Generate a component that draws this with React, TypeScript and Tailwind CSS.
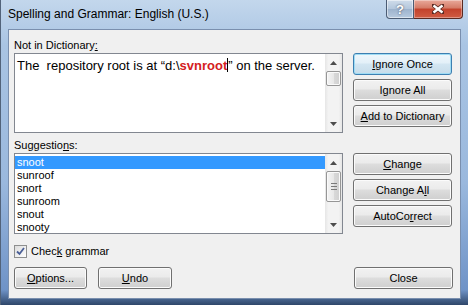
import type { ReactNode } from "react";

// --- estilos base ---
const UI_FONT = "font-['Segoe_UI','Liberation_Sans',Arial,sans-serif]";

const SUGGESTIONS = ["snoot", "sunroof", "snort", "sunroom", "snout", "snooty"];

// Botão no estilo Windows 7
function WinButton({
  children,
  isDefault = false,
  className = "",
}: {
  children: ReactNode;
  isDefault?: boolean;
  className?: string;
}) {
  return (
    <div
      className={`flex h-[22px] items-center justify-center rounded-[3px] border text-[11px] leading-none text-black ${
        isDefault
          ? "border-[#3c7fb1] bg-[linear-gradient(#eef7fc,#e3f0f8_45%,#d3e6f2_50%,#c6dcea)] shadow-[inset_0_0_0_1px_#9fdcf4]"
          : "border-[#707070] bg-[linear-gradient(#f2f2f2,#ebebeb_45%,#dddddd_50%,#cfcfcf)] shadow-[inset_0_0_0_1px_#fbfbfb]"
      } ${className}`}
    >
      {children}
    </div>
  );
}

// Seta da barra de rolagem
function Arrow({ up }: { up?: boolean }) {
  return (
    <div className="flex h-[17px] items-center justify-center">
      <svg width="7" height="4" viewBox="0 0 7 4">
        {up ? (
          <path d="M0 4 L3.5 0 L7 4 Z" fill="#4d4d4d" />
        ) : (
          <path d="M0 0 L3.5 4 L7 0 Z" fill="#4d4d4d" />
        )}
      </svg>
    </div>
  );
}

// Barra de rolagem vertical
function ScrollBar({ thumb, grip }: { thumb: number; grip?: boolean }) {
  return (
    <div className="flex w-[17px] shrink-0 flex-col bg-[linear-gradient(90deg,#e6e6e6,#f3f3f3_20%,#f3f3f3_80%,#e6e6e6)]">
      <Arrow up />
      <div className="flex-1">
        <div
          className="mx-[1px] flex items-center justify-center rounded-[2px] border border-[#969696] bg-[linear-gradient(90deg,#f4f4f4,#e8e8e8_50%,#d9d9d9_51%,#d0d0d0)] shadow-[inset_0_0_0_1px_#fafafa]"
          style={{ height: thumb }}
        >
          {grip && (
            <div className="flex flex-col gap-[2px]">
              <div className="h-px w-[6px] bg-[#7a7a7a]" />
              <div className="h-px w-[6px] bg-[#7a7a7a]" />
              <div className="h-px w-[6px] bg-[#7a7a7a]" />
            </div>
          )}
        </div>
      </div>
      <Arrow />
    </div>
  );
}

export default function App() {
  return (
    <div
      className={`relative h-[305px] w-[468px] overflow-hidden border-l border-[#52637a] bg-[linear-gradient(180deg,#c3d7ec,#a9c4e3_15%,#9ab8dd_60%,#6f93c7_95%,#2e4669)] ${UI_FONT}`}
    >
      {/* barra de título */}
      <div className="flex h-[29px] items-start">
        <div className="pl-[7px] pt-[7px] text-[12px] leading-[15px] text-black">
          Spelling and Grammar: English (U.S.)
        </div>
        <div className="ml-auto mr-[5px] flex">
          <div className="flex h-[19px] w-[28px] items-center justify-center rounded-bl-[4px] border border-t-0 border-[#4b5c74] bg-[linear-gradient(#cfdcea,#b3c6dc_50%,#9db3cd_51%,#b7cadf)] shadow-[inset_0_0_0_1px_rgba(255,255,255,0.5)]">
            <span className="text-[13px] font-bold leading-none text-white [text-shadow:0_0_2px_#334]">
              ?
            </span>
          </div>
          <div className="flex h-[19px] w-[49px] items-center justify-center rounded-br-[4px] border border-l-0 border-t-0 border-[#5a2a22] bg-[linear-gradient(#e9a99b,#d47a66_45%,#c2412b_50%,#d05c43)] shadow-[inset_0_0_0_1px_rgba(255,255,255,0.35)]">
            <svg width="12" height="10" viewBox="0 0 12 10">
              <path
                d="M1 1 L11 9 M11 1 L1 9"
                stroke="#5a2a22"
                strokeWidth="4"
                strokeLinecap="round"
              />
              <path
                d="M1.5 1.5 L10.5 8.5 M10.5 1.5 L1.5 8.5"
                stroke="#ffffff"
                strokeWidth="2.4"
              />
            </svg>
          </div>
        </div>
      </div>

      {/* conteúdo */}
      <div className="mx-[7px] flex h-[270px] flex-col border border-[#7a8fae] bg-[#f0f0f0] pl-[5px] pr-[7px] pt-[8px] text-[11px] leading-[15px] text-black">
        <div className="h-[15px]">
          Not in Dictionary<span className="underline">:</span>
        </div>

        <div className="flex gap-[10px]">
          <div className="flex h-[80px] w-[329px] border border-[#828790] bg-white">
            <div className="flex-1 pl-[2px] pt-[2px] font-['Liberation_Sans',Arial,sans-serif] text-[13px] leading-[16px] whitespace-nowrap">
              The&nbsp; repository root is at “d:\
              <span className="font-bold text-[#d42020]">svnroot</span>
              <span className="inline-block h-[14px] w-px translate-y-[2px] bg-black" />” on the server.
            </div>
            <ScrollBar thumb={15} />
          </div>
          <div className="flex w-[99px] flex-col gap-[4px]">
            <WinButton isDefault>
              <span className="underline">I</span>gnore Once
            </WinButton>
            <WinButton>
              I<span className="underline">g</span>nore All
            </WinButton>
            <WinButton>
              <span className="underline">A</span>dd to Dictionary
            </WinButton>
          </div>
        </div>

        <div className="mt-[5px] h-[15px]">
          Suggestio<span className="underline">n</span>s:
        </div>

        <div className="flex gap-[10px]">
          <div className="flex h-[81px] w-[329px] border border-[#828790] bg-white">
            <div className="flex-1 pt-[2px] font-['Liberation_Sans',Arial,sans-serif] text-[11px] leading-[13px]">
              {SUGGESTIONS.map((word, i) => (
                <div
                  key={word}
                  className={`h-[13px] pl-[2px] ${
                    i === 0 ? "bg-[#3399ff] text-white" : ""
                  }`}
                >
                  {word}
                </div>
              ))}
            </div>
            <ScrollBar thumb={31} grip />
          </div>
          <div className="flex w-[99px] flex-col gap-[4px]">
            <WinButton>
              <span className="underline">C</span>hange
            </WinButton>
            <WinButton>
              Change A<span className="underline">l</span>l
            </WinButton>
            <WinButton>
              AutoCo<span className="underline">r</span>rect
            </WinButton>
          </div>
        </div>

        {/* verificar gramática */}
        <div className="mt-[11px] flex h-[13px] items-center gap-[4px]">
          <div className="flex h-[13px] w-[13px] items-center justify-center border border-[#8e8f8f] bg-[linear-gradient(135deg,#dcdcdc,#ffffff)]">
            <svg width="9" height="9" viewBox="0 0 9 9">
              <path
                d="M1 4.5 L3.5 7 L8 1"
                fill="none"
                stroke="#4a5f97"
                strokeWidth="1.8"
              />
            </svg>
          </div>
          <span>
            Chec<span className="underline">k</span> grammar
          </span>
        </div>

        {/* botões inferiores */}
        <div className="mt-[9px] flex gap-[11px]">
          <WinButton className="w-[73px]">
            <span className="underline">O</span>ptions...
          </WinButton>
          <WinButton className="w-[74px]">
            <span className="underline">U</span>ndo
          </WinButton>
          <WinButton className="ml-auto w-[99px]">Close</WinButton>
        </div>
      </div>
    </div>
  );
}
